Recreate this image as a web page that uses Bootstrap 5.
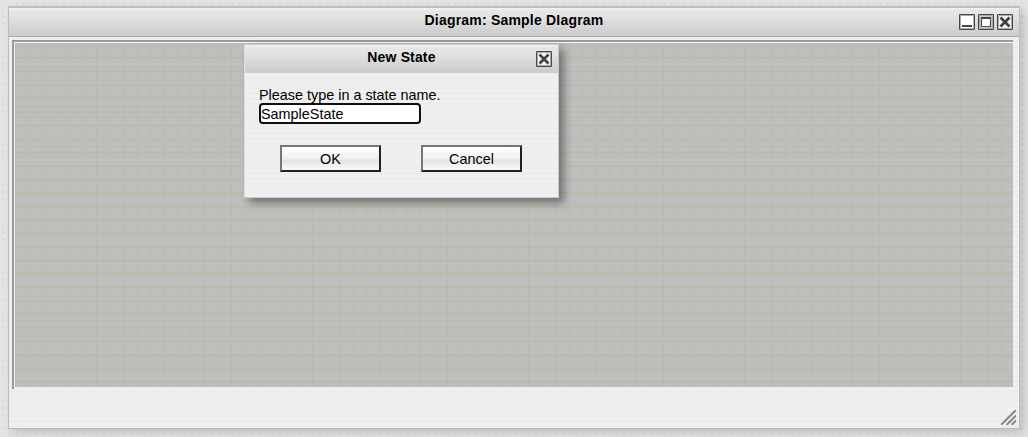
<!DOCTYPE html>
<html lang="en">
<head>
<meta charset="utf-8">
<title>Diagram</title>
<link rel="stylesheet" href="https://cdn.jsdelivr.net/npm/bootstrap@5.3.0/dist/css/bootstrap.min.css">
<style>
body{height:437px;padding:6px 8px 7px;font:14px/19px "Liberation Sans",Arial,sans-serif;color:#000;
 background:radial-gradient(circle at 3px 3px,#d6d6d6 .6px,transparent 1.5px) 0 0/6.75px 6.75px #e4e4e4}
.win{height:423px;width:1012px;border:1px solid #bcbcbc;border-top:2px solid #bebebe;
 background:repeating-linear-gradient(#f0f0f0 0 2px,#ececec 3px 4px,#f0f0f0 5px);box-shadow:4px 4px 8px rgba(0,0,0,.16)}
.bar{height:29px;border-bottom:1px solid #aaa;background:linear-gradient(#f2f2f2 0,#e6e6e6 3px,#e3e3e3 30%,#cbcbcb)}
.bar b{line-height:25px;letter-spacing:.2px}
.tools{right:6px;top:6px;gap:3px}
.tools svg,.pane svg{display:block}
.canvas-area{margin:3px 6px 0 3px;height:349px;border-left:2px solid #999;border-top:2px solid #999;padding:1px 0 2px 1px;box-shadow:inset 1px 1px #f4f4f4}
.gridded{height:344px;background:
 linear-gradient(90deg,rgba(181,187,160,.6) 1.3px,transparent 1.3px) 0 0/13.5px 100%,
 linear-gradient(rgba(181,187,160,.6) 1.5px,transparent 1.5px) 0 .5px/100% 13.5px,
 repeating-linear-gradient(#bfbfbf 0 2px,#bdbdbd 3px 4px,#bfbfbf 5px)}
.pane{left:229px;top:1px;width:315px;height:154px;border:1px solid #c8c8c8;border-left-color:#ddd;
 background:repeating-linear-gradient(#f0f0f0 0 2px,#ececec 3px 4px,#f0f0f0 5px);box-shadow:5px 5px 8px rgba(0,0,0,.4)}
.pane .bar{height:28px;border:0}
.pane .bar b{line-height:25px;letter-spacing:.15px}
.pane-close{right:6px;top:6px}
.field{width:162px;height:21px;margin-top:-1px;border:2px solid #101010;border-radius:4px;padding:0;background:#fff;font:14.4px/17px "Liberation Sans",Arial,sans-serif;outline:0;color:#000}
.msg{padding:12px 14px 0;font-size:14.4px}
.msg span{height:19px;line-height:20px}
.btns{gap:40px;padding:21px 0 0 35px}
.push{width:101px;height:27px;border:2px solid;border-color:#767676 #212121 #212121 #767676;font:14.4px/22px "Liberation Sans",Arial,sans-serif;color:#000;
 background:linear-gradient(#fff,#f1f1f1 50%,#e3e3e3 58%,#f4f4f4 85%,#f8f8f8);padding:1px 0 0}
.grip{right:3px;bottom:3px}
</style>
<script src="https://cdn.jsdelivr.net/npm/bootstrap@5.3.0/dist/js/bootstrap.bundle.min.js"></script>
</head>
<body class="overflow-hidden">
<div class="win position-relative">
 <div class="bar position-relative text-center"><b>Diagram: Sample DIagram</b>
  <div class="tools position-absolute d-flex">
   <svg width="16" height="16"><path d="M.5.5h15v15H.5z" fill="#fff" stroke="#484848"/><path d="M1.5 1.5h13v13h-13z" fill="none" stroke="#aaa"/><path d="M3 11h10v2H3z" fill="#444"/></svg>
   <svg width="16" height="16"><path d="M.5.5h15v15H.5z" fill="#ccc" stroke="#484848"/><path d="M1.5 1.5h13v13h-13z" fill="none" stroke="#aaa"/><path d="M3.5 4h9v8.5h-9z" fill="#fff" stroke="#505050" stroke-width="1.2"/><path d="M3 4h10" stroke="#484848" stroke-width="2"/></svg>
   <svg width="16" height="16"><path d="M.5.5h15v15H.5z" fill="#f3f3f3" stroke="#484848"/><path d="M1.5 1.5h13v13h-13z" fill="none" stroke="#aaa"/><path d="M3.5 3.5l9 9M12.5 3.5l-9 9" stroke="#404040" stroke-width="2.7"/></svg>
  </div>
 </div>
 <div class="canvas-area">
  <div class="gridded position-relative">
   <div class="pane position-absolute">
    <div class="bar position-relative text-center"><b>New State</b>
     <svg class="position-absolute pane-close" width="16" height="16"><path d="M.5.5h15v15H.5z" fill="#f3f3f3" stroke="#484848"/><path d="M1.5 1.5h13v13h-13z" fill="none" stroke="#aaa"/><path d="M3.5 3.5l9 9M12.5 3.5l-9 9" stroke="#404040" stroke-width="2.7"/></svg>
    </div>
    <div class="msg d-flex flex-column"><span class="text-nowrap">Please type in a state name.</span>
     <input class="field" value="SampleState" aria-label="State name">
    </div>
    <div class="d-flex btns"><button class="push">OK</button><button class="push">Cancel</button></div>
   </div>
  </div>
 </div>
 <svg class="grip position-absolute" width="15" height="15"><path d="M0 15L15 0M5.5 15L15 5.5M10.5 15L15 10.5" stroke="#888" stroke-width="2"/></svg>
</div>
</body>
</html>
